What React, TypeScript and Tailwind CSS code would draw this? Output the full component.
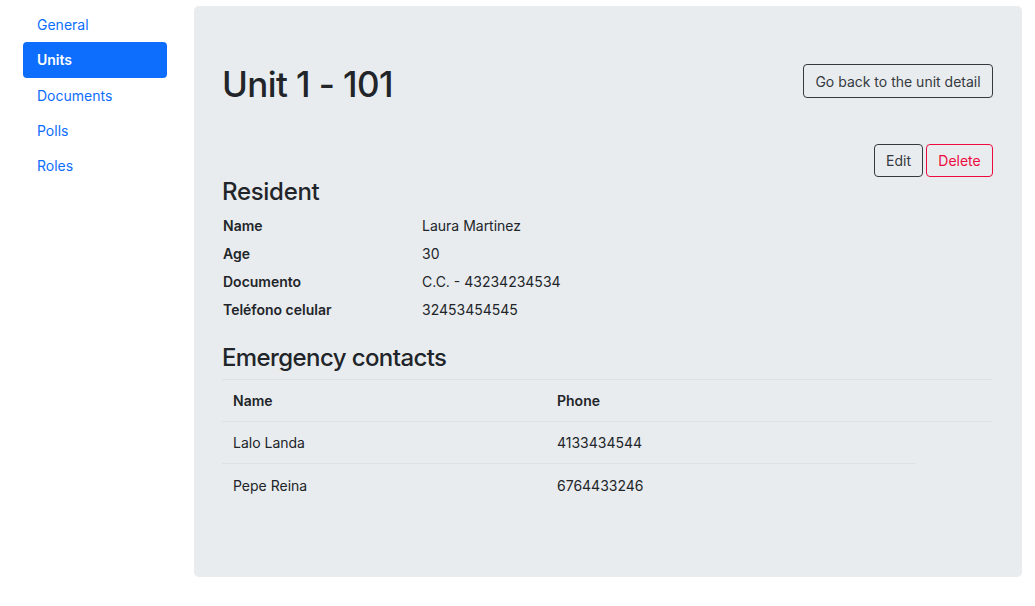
import React from "react";

const nav = ["General", "Units", "Documents", "Polls", "Roles"];

export default function App() {
  return (
    <div
      className="w-[1035px] h-[606px] bg-white flex text-[#212529]"
      style={{ fontFamily: "Inter, 'Noto Sans', sans-serif" }}
    >
      <div className="w-[194px] shrink-0 pt-[7px] pl-[23px] pr-[27px]">
        {nav.map((n) => (
          <div
            key={n}
            className={
              "h-[35.3px] flex items-center px-[14px] rounded-[4px] text-[14px] " +
              (n === "Units" ? "bg-[#0d6efd] text-white font-semibold" : "text-[#0d6efd]")
            }
          >
            {n}
          </div>
        ))}
      </div>
      <div className="mt-[6px] w-[828px] h-[571px] bg-[#e9ecef] rounded-[5px] pl-[28px] pr-[29px] pt-[58px]">
        <div className="flex items-start justify-between h-[50px]">
          <h1 className="mt-[3px] text-[35px] font-medium tracking-[-0.6px] leading-none">Unit 1 - 101</h1>
          <button className="h-[34px] w-[190px] border border-[#343a40] rounded-[4px] text-[14px] text-[#343a40]">
            Go back to the unit detail
          </button>
        </div>
        <div className="flex justify-end gap-[3px] mt-[30px]">
          <button className="h-[33px] w-[49px] border border-[#343a40] rounded-[4px] text-[14px] text-[#343a40]">
            Edit
          </button>
          <button className="h-[33px] w-[67px] border border-[#ee0a3c] rounded-[4px] text-[14px] text-[#ee0a3c]">
            Delete
          </button>
        </div>
        <h2 className="text-[24px] font-medium leading-none mt-[3px] tracking-[-0.3px]">Resident</h2>
        <div className="mt-[7px] text-[14px]">
          {[
            ["Name", "Laura Martinez"],
            ["Age", "30"],
            ["Documento", "C.C. - 43234234534"],
            ["Teléfono celular", "32453454545"],
          ].map(([k, v]) => (
            <div key={k} className="flex h-[28px] items-center">
              <div className="w-[200px] font-semibold pl-[1px]">{k}</div>
              <div>{v}</div>
            </div>
          ))}
        </div>
        <h2 className="text-[24px] font-medium leading-none mt-[23px] tracking-[-0.6px]">Emergency contacts</h2>
        <div className="mt-[9px] text-[14px]">
          <div className="flex h-[42px] items-center border-t border-[#dee2e6] font-semibold">
            <div className="w-[324px] pl-[11px]">Name</div>
            <div className="pl-[11px]">Phone</div>
          </div>
          <div className="flex h-[42px] items-center border-t border-[#dee2e6]">
            <div className="w-[324px] pl-[11px]">Lalo Landa</div>
            <div className="pl-[11px]">4133434544</div>
          </div>
          <div className="w-[694px] h-px bg-[#dee2e6]" />
          <div className="flex h-[42px] items-center">
            <div className="w-[324px] pl-[11px]">Pepe Reina</div>
            <div className="pl-[11px]">6764433246</div>
          </div>
        </div>
      </div>
    </div>
  );
}
